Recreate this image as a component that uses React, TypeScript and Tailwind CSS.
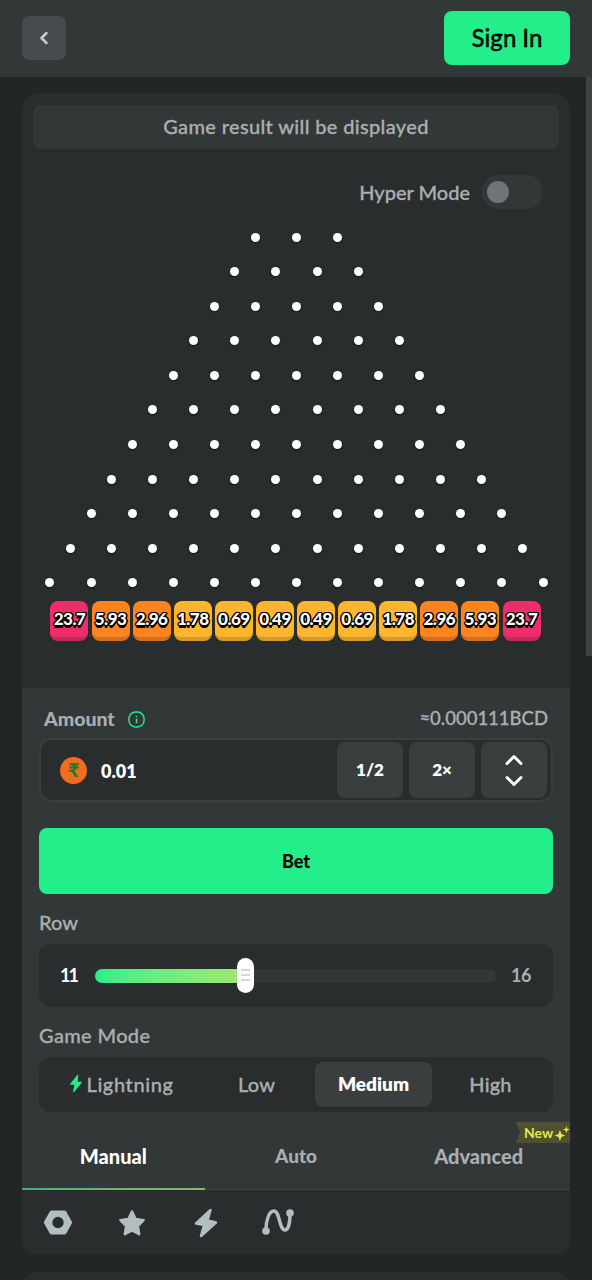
import React from 'react';
import { ChevronLeft, ChevronUp, ChevronDown } from 'lucide-react';

const pegRows = [3, 4, 5, 6, 7, 8, 9, 10, 11, 12, 13];

const chips = [
  { label: '23.7', color: 'bg-[#ee2d6a] border-[#c42a5c]' },
  { label: '5.93', color: 'bg-[#fe8420] border-[#d4701f]' },
  { label: '2.96', color: 'bg-[#fe8420] border-[#d4701f]' },
  { label: '1.78', color: 'bg-[#ffb52e] border-[#d69a2a]' },
  { label: '0.69', color: 'bg-[#ffb52e] border-[#d69a2a]' },
  { label: '0.49', color: 'bg-[#ffb52e] border-[#d69a2a]' },
  { label: '0.49', color: 'bg-[#ffb52e] border-[#d69a2a]' },
  { label: '0.69', color: 'bg-[#ffb52e] border-[#d69a2a]' },
  { label: '1.78', color: 'bg-[#ffb52e] border-[#d69a2a]' },
  { label: '2.96', color: 'bg-[#fe8420] border-[#d4701f]' },
  { label: '5.93', color: 'bg-[#fe8420] border-[#d4701f]' },
  { label: '23.7', color: 'bg-[#ee2d6a] border-[#c42a5c]' },
];

function Bolt({ className }: { className: string }) {
  return (
    <svg viewBox="0 0 24 32" className={className} fill="currentColor">
      <path
        d="M15 2 L3 17 H10.5 L8 30 L21 14 H13.5 Z"
        stroke="currentColor"
        strokeWidth="2"
        strokeLinejoin="round"
      />
    </svg>
  );
}

export default function App() {
  return (
    <div className="relative h-[1280px] w-[592px] overflow-hidden bg-[#232626] font-['Lato',sans-serif] text-[#a9afb1]">
      {/* top bar */}
      <header className="flex h-[77px] items-center justify-between bg-[#323738] pl-[22px] pr-[22px]">
        <button className="mb-[1px] flex h-[44px] w-[44px] items-center justify-center rounded-lg bg-[#464c4e] text-[#c3cacc]">
          <ChevronLeft size={20} strokeWidth={3} />
        </button>
        <button className="mb-[1px] h-[54px] w-[126px] rounded-lg bg-[#24ee89] text-[24px] font-medium text-black [-webkit-text-stroke:0.3px_black]">Sign In</button>
      </header>

      <main className="px-[22px] pt-4">
        <section className="overflow-hidden rounded-2xl bg-[#292d2e]">
          {/* board */}
          <div className="h-[595px] px-[11px] pt-3">
            <div className="flex h-[44px] items-center justify-center rounded-lg bg-[#323738] pb-[2px] text-[20px] font-medium tracking-[0.35px] [-webkit-text-stroke:0.3px_#a9afb1]">
              Game result will be displayed
            </div>
            <div className="mt-[26px] flex items-center justify-end gap-3 pr-[16px]">
              <span className="text-[20px] font-medium [-webkit-text-stroke:0.3px_#a9afb1]">Hyper Mode</span>
              <div className="flex h-[34px] w-[61px] items-center rounded-full bg-[#323738] pl-[5px]">
                <div className="h-[22px] w-[22px] rounded-full bg-[#6f7577]" />
              </div>
            </div>
            <div className="mt-[23.5px] flex flex-col gap-[25.6px] pl-[1px]">
              {pegRows.map((count) => (
                <div key={count} className="flex justify-center gap-[32.1px]">
                  {Array.from({ length: count }).map((_, i) => (
                    <div key={i} className="h-[9px] w-[9px] rounded-full bg-white shadow-[0_1px_2px_rgba(0,0,0,0.5)]" />
                  ))}
                </div>
              ))}
            </div>
            <div className="mt-[13.5px] flex justify-center gap-[3.1px] pr-[1px]">
              {chips.map((chip, i) => (
                <div
                  key={i}
                  className={`flex h-[40px] w-[38px] items-center justify-center rounded-lg border-b-4 text-[17px] font-black tracking-[-0.5px] text-white [text-shadow:1.5px_0_0_#000,-1.5px_0_0_#000,0_1.5px_0_#000,0_-1.5px_0_#000,1px_1px_0_#000,-1px_1px_0_#000,1px_-1px_0_#000,-1px_-1px_0_#000,0_2.5px_0_#000] ${chip.color}`}
                >
                  {chip.label}
                </div>
              ))}
            </div>
          </div>

          {/* bet controls */}
          <div className="bg-[#323738]">
            <div className="px-[17px] pt-[19px]">
              <div className="flex h-[24px] items-center justify-between px-[5px]">
                <div className="flex items-center gap-[13px]">
                  <span className="text-[19.5px] font-black">Amount</span>
                  <svg viewBox="0 0 18 18" className="h-[17px] w-[17px] text-[#24ee89]" fill="none" stroke="currentColor" strokeWidth="1.5">
                    <rect x="1" y="1" width="16" height="16" rx="7" />
                    <path d="M9 8v5M9 5v1.4" />
                  </svg>
                </div>
                <span className="text-[18.5px] font-medium [-webkit-text-stroke:0.3px_#a9afb1]">≈0.000111BCD</span>
              </div>

              <div className="mt-[7px] flex h-[64px] items-center justify-between rounded-xl border-2 border-[#3a3e3f] bg-[#292d2e] pl-[19px] pr-[4px]">
                <div className="flex items-center gap-[14px]">
                  <div className="flex h-[27px] w-[27px] items-center justify-center rounded-full bg-[#f26b21] text-[19px] font-black text-[#1f7a2c]">₹</div>
                  <span className="pt-[2px] text-[18px] font-extrabold text-white">0.01</span>
                </div>
                <div className="flex gap-[6px] text-[17px] font-extrabold text-white">
                  <button className="h-[56px] w-[66px] rounded-lg bg-[#3a3e3f]">1/2</button>
                  <button className="h-[56px] w-[66px] rounded-lg bg-[#3a3e3f]">2×</button>
                  <button className="flex h-[56px] w-[66px] flex-col items-center justify-center rounded-lg bg-[#3a3e3f]">
                    <ChevronUp size={28} strokeWidth={2.5} />
                    <ChevronDown size={28} strokeWidth={2.5} className="-mt-[7px]" />
                  </button>
                </div>
              </div>

              <button className="mt-[26px] h-[66px] w-full rounded-lg bg-[#24ee89] text-[18px] font-black text-black">Bet</button>

              <div className="mt-[17px] h-[23px] text-[20px] font-medium leading-[22px] [-webkit-text-stroke:0.3px_#a9afb1]">Row</div>
              <div className="mt-[10px] flex h-[63px] items-center rounded-xl bg-[#292d2e] pl-[21px] pr-[22px]">
                <span className="w-[35px] text-[18px] font-bold tracking-[-2px] text-white">11</span>
                <div className="relative h-[14px] w-[401px] rounded-full bg-[#323738]">
                  <div className="h-full w-[150px] rounded-full bg-gradient-to-r from-[#24ee89] to-[#9fe871]" />
                  <div className="absolute left-[142px] top-[-11px] flex h-[35px] w-[17px] flex-col items-center justify-center gap-[3px] rounded-full bg-white">
                    <div className="h-[2px] w-[9px] bg-[#d5d8d8]" />
                    <div className="h-[2px] w-[9px] bg-[#d5d8d8]" />
                    <div className="h-[2px] w-[9px] bg-[#d5d8d8]" />
                  </div>
                </div>
                <span className="ml-auto text-[18px] font-bold tracking-[-0.5px]">16</span>
              </div>

              <div className="mt-[17px] h-[23px] text-[20px] font-medium leading-[22px] tracking-[0.35px] [-webkit-text-stroke:0.3px_#a9afb1]">Game Mode</div>
              <div className="mt-[10px] grid h-[55px] grid-cols-[154px_117px_117px_117px] items-center rounded-xl bg-[#292d2e] pl-[5px] text-[20px] font-medium tracking-[0.2px]">
                <div className="flex items-center justify-center gap-[4px] pb-[2px] tracking-[0.6px] [-webkit-text-stroke:0.3px_#a9afb1]">
                  <Bolt className="h-[19px] w-[14px] text-[#24ee89]" />
                  Lightning
                </div>
                <div className="pb-[2px] text-center [-webkit-text-stroke:0.3px_#a9afb1]">Low</div>
                <div className="flex h-[45px] items-center justify-center rounded-lg bg-[#3a3e3f] text-[19px] font-extrabold tracking-normal text-white">Medium</div>
                <div className="pb-[2px] text-center [-webkit-text-stroke:0.3px_#a9afb1]">High</div>
              </div>
            </div>

            {/* tabs */}
            <div className="relative mt-[13px] grid h-[64px] grid-cols-3 items-center pb-[2px] text-center text-[20px] font-black">
              <div className="text-white">Manual</div>
              <div className="text-[19px]">Auto</div>
              <div>Advanced</div>
              <div className="absolute right-0 top-[-3px] flex h-[21px] w-[54px] items-center gap-[1px] bg-[#50512f] pl-[8px] text-[14px] font-bold text-[#e4e84a] [clip-path:polygon(0_0,100%_0,100%_100%,0_100%,4px_50%)]">
                New
                <svg viewBox="0 0 16 16" className="h-[16px] w-[16px]" fill="currentColor">
                  <path d="M6 5 L7.5 9 L11.5 10.5 L7.5 12 L6 16 L4.5 12 L0.5 10.5 L4.5 9 Z" />
                  <path d="M12.5 1 L13.4 3.6 L16 4.5 L13.4 5.4 L12.5 8 L11.6 5.4 L9 4.5 L11.6 3.6 Z" />
                </svg>
              </div>
            </div>
          </div>

          <div className="h-[1px] bg-[#3f4445]">
            <div className="h-[2px] w-[183px] -translate-y-[1px] bg-gradient-to-r from-[#3fb574] to-[#8fb36c]" />
          </div>

          {/* game shortcuts */}
          <div className="flex h-[65px] items-center pl-[21px] text-[#b3bec1]">
            <svg viewBox="0 0 30 27" className="h-[27px] w-[30px]" fill="currentColor">
              <path
                fillRule="evenodd"
                d="M8.6 1.5 H21.4 Q22.6 1.5 23.2 2.5 L28.8 12.4 Q29.4 13.5 28.8 14.6 L23.2 24.5 Q22.6 25.5 21.4 25.5 H8.6 Q7.4 25.5 6.8 24.5 L1.2 14.6 Q0.6 13.5 1.2 12.4 L6.8 2.5 Q7.4 1.5 8.6 1.5 Z M15 7.8 A5.7 5.7 0 1 0 15 19.2 A5.7 5.7 0 1 0 15 7.8 Z"
              />
            </svg>
            <svg viewBox="0 0 30 30" className="ml-[44px] h-[30px] w-[30px]" fill="currentColor">
              <path
                d="M15 3.5 L18.6 11 L26.6 12.2 L20.8 18 L22.2 26.2 L15 22.4 L7.8 26.2 L9.2 18 L3.4 12.2 L11.4 11 Z"
                stroke="currentColor"
                strokeWidth="2.5"
                strokeLinejoin="round"
              />
            </svg>
            <svg viewBox="0 0 24 30" className="ml-[47px] h-[30px] w-[24px]" fill="currentColor">
              <path
                d="M16.5 2 L2 15.5 L10 17 L7 28 L22 14.5 L13.5 12.5 Z"
                stroke="currentColor"
                strokeWidth="2.5"
                strokeLinejoin="round"
              />
            </svg>
            <svg viewBox="0 0 32 28" className="ml-[44px] mb-[2px] h-[28px] w-[32px]" fill="none" stroke="currentColor" strokeWidth="3.4" strokeLinecap="round">
              <path d="M4 22 C4 12 7 3 12 3 C18 3 17 22 23 22 C27 22 28 12 28 6" />
              <circle cx="4" cy="23" r="3.8" fill="currentColor" stroke="none" />
              <circle cx="28" cy="5" r="3.8" fill="currentColor" stroke="none" />
            </svg>
          </div>
        </section>

        <div className="mt-[17px] h-[60px] rounded-2xl bg-[#292d2e]" />
      </main>

      {/* scrollbar */}
      <div className="absolute right-0 top-[77px] h-[579px] w-[6px] bg-[#3f4344]" />
    </div>
  );
}
